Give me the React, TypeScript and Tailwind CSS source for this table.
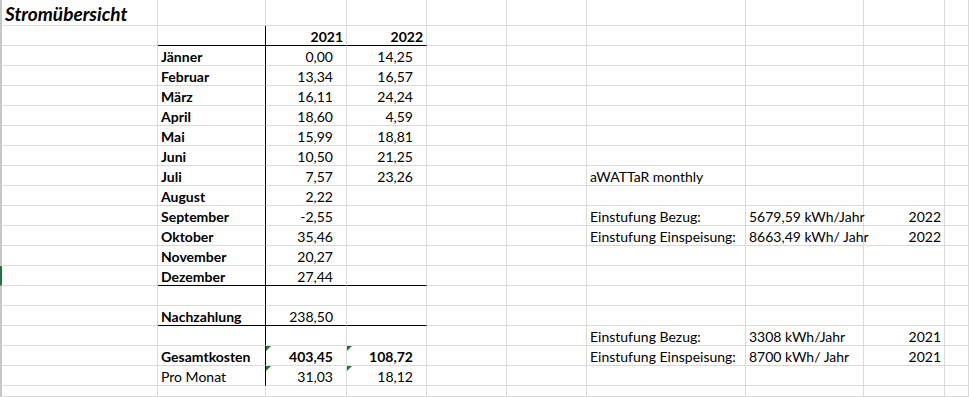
import clsx from "clsx";

type Row = {
  label?: string;
  labelBold?: boolean;
  c?: string;
  d?: string;
  head?: boolean;
  numBold?: boolean;
  g?: string;
  h?: string;
  i?: string;
  line?: boolean;
  tri?: boolean;
  selected?: boolean;
};

const rows: Row[] = [
  { c: "2021", d: "2022", head: true, line: true },
  { label: "Jänner", labelBold: true, c: "0,00", d: "14,25" },
  { label: "Februar", labelBold: true, c: "13,34", d: "16,57" },
  { label: "März", labelBold: true, c: "16,11", d: "24,24" },
  { label: "April", labelBold: true, c: "18,60", d: "4,59" },
  { label: "Mai", labelBold: true, c: "15,99", d: "18,81" },
  { label: "Juni", labelBold: true, c: "10,50", d: "21,25" },
  { label: "Juli", labelBold: true, c: "7,57", d: "23,26", g: "aWATTaR monthly" },
  { label: "August", labelBold: true, c: "2,22" },
  { label: "September", labelBold: true, c: "-2,55", g: "Einstufung Bezug:", h: "5679,59 kWh/Jahr", i: "2022" },
  { label: "Oktober", labelBold: true, c: "35,46", g: "Einstufung Einspeisung:", h: "8663,49 kWh/ Jahr", i: "2022" },
  { label: "November", labelBold: true, c: "20,27" },
  { label: "Dezember", labelBold: true, c: "27,44", line: true, selected: true },
  {},
  { label: "Nachzahlung", labelBold: true, c: "238,50", line: true },
  { g: "Einstufung Bezug:", h: "3308 kWh/Jahr", i: "2021" },
  { label: "Gesamtkosten", labelBold: true, c: "403,45", d: "108,72", numBold: true, tri: true, g: "Einstufung Einspeisung:", h: "8700 kWh/ Jahr", i: "2021" },
  { label: "Pro Monat", c: "31,03", d: "18,12", tri: true },
];

const grid = "grid grid-cols-[158px_108px_81px_80px_80px_80px_159px_118px_81px_24px]";
const cell = "relative border-r border-b border-[#dadada] whitespace-nowrap overflow-visible";
const txt = "pt-[2px] leading-[17px]";

const Tri = () => (
  <span className="absolute left-0 top-0 h-0 w-0 border-t-[5px] border-r-[5px] border-t-[#1e7a34] border-r-transparent" />
);

const Spreadsheet = () => (
  <div className="h-[397px] w-[969px] overflow-hidden bg-white text-[14px] text-black font-['Lato',sans-serif]">
    {/* title row */}
    <div className={clsx(grid, "h-[26px]")}>
      <div className={clsx(cell, "border-l-2 border-l-[#c6c6c6] pl-[3px] pt-[4px] text-[19px] font-bold italic leading-[20px]")}>
        Stromübersicht
      </div>
      {Array.from({ length: 9 }).map((_, k) => (
        <div key={k} className={cell} />
      ))}
    </div>

    {rows.map((r, idx) => {
      const black = r.line ? "border-b-black" : "";
      return (
        <div key={idx} className={clsx(grid, "h-5")}>
          <div className={clsx(cell, "border-l-2", r.selected ? "border-l-[#217346]" : "border-l-[#c6c6c6]")} />
          <div className={clsx(cell, txt, "border-r-black pl-[3px]", black, r.labelBold && "font-bold")}>{r.label}</div>
          <div className={clsx(cell, txt, "text-right", black, r.head ? "pr-[3px] font-bold" : "pr-[13px]", r.numBold && "font-bold")}>
            {r.tri && <Tri />}
            {r.c}
          </div>
          <div className={clsx(cell, txt, "text-right", black, r.head ? "pr-[3px] font-bold" : "pr-[13px]", r.numBold && "font-bold")}>
            {r.tri && <Tri />}
            {r.d}
          </div>
          <div className={cell} />
          <div className={cell} />
          <div className={clsx(cell, txt, "pl-[3px]")}>{r.g}</div>
          <div className={clsx(cell, txt, "pl-[3px]")}>{r.h}</div>
          <div className={clsx(cell, txt, "pr-[3px] text-right")}>{r.i}</div>
          <div className={cell} />
        </div>
      );
    })}

    {/* partial last row */}
    <div className={clsx(grid, "h-[11px]")}>
      <div className={clsx(cell, "border-l-2 border-l-[#c6c6c6]")} />
      {Array.from({ length: 9 }).map((_, k) => (
        <div key={k} className={cell} />
      ))}
    </div>
  </div>
);

export default function App() {
  return <Spreadsheet />;
}
